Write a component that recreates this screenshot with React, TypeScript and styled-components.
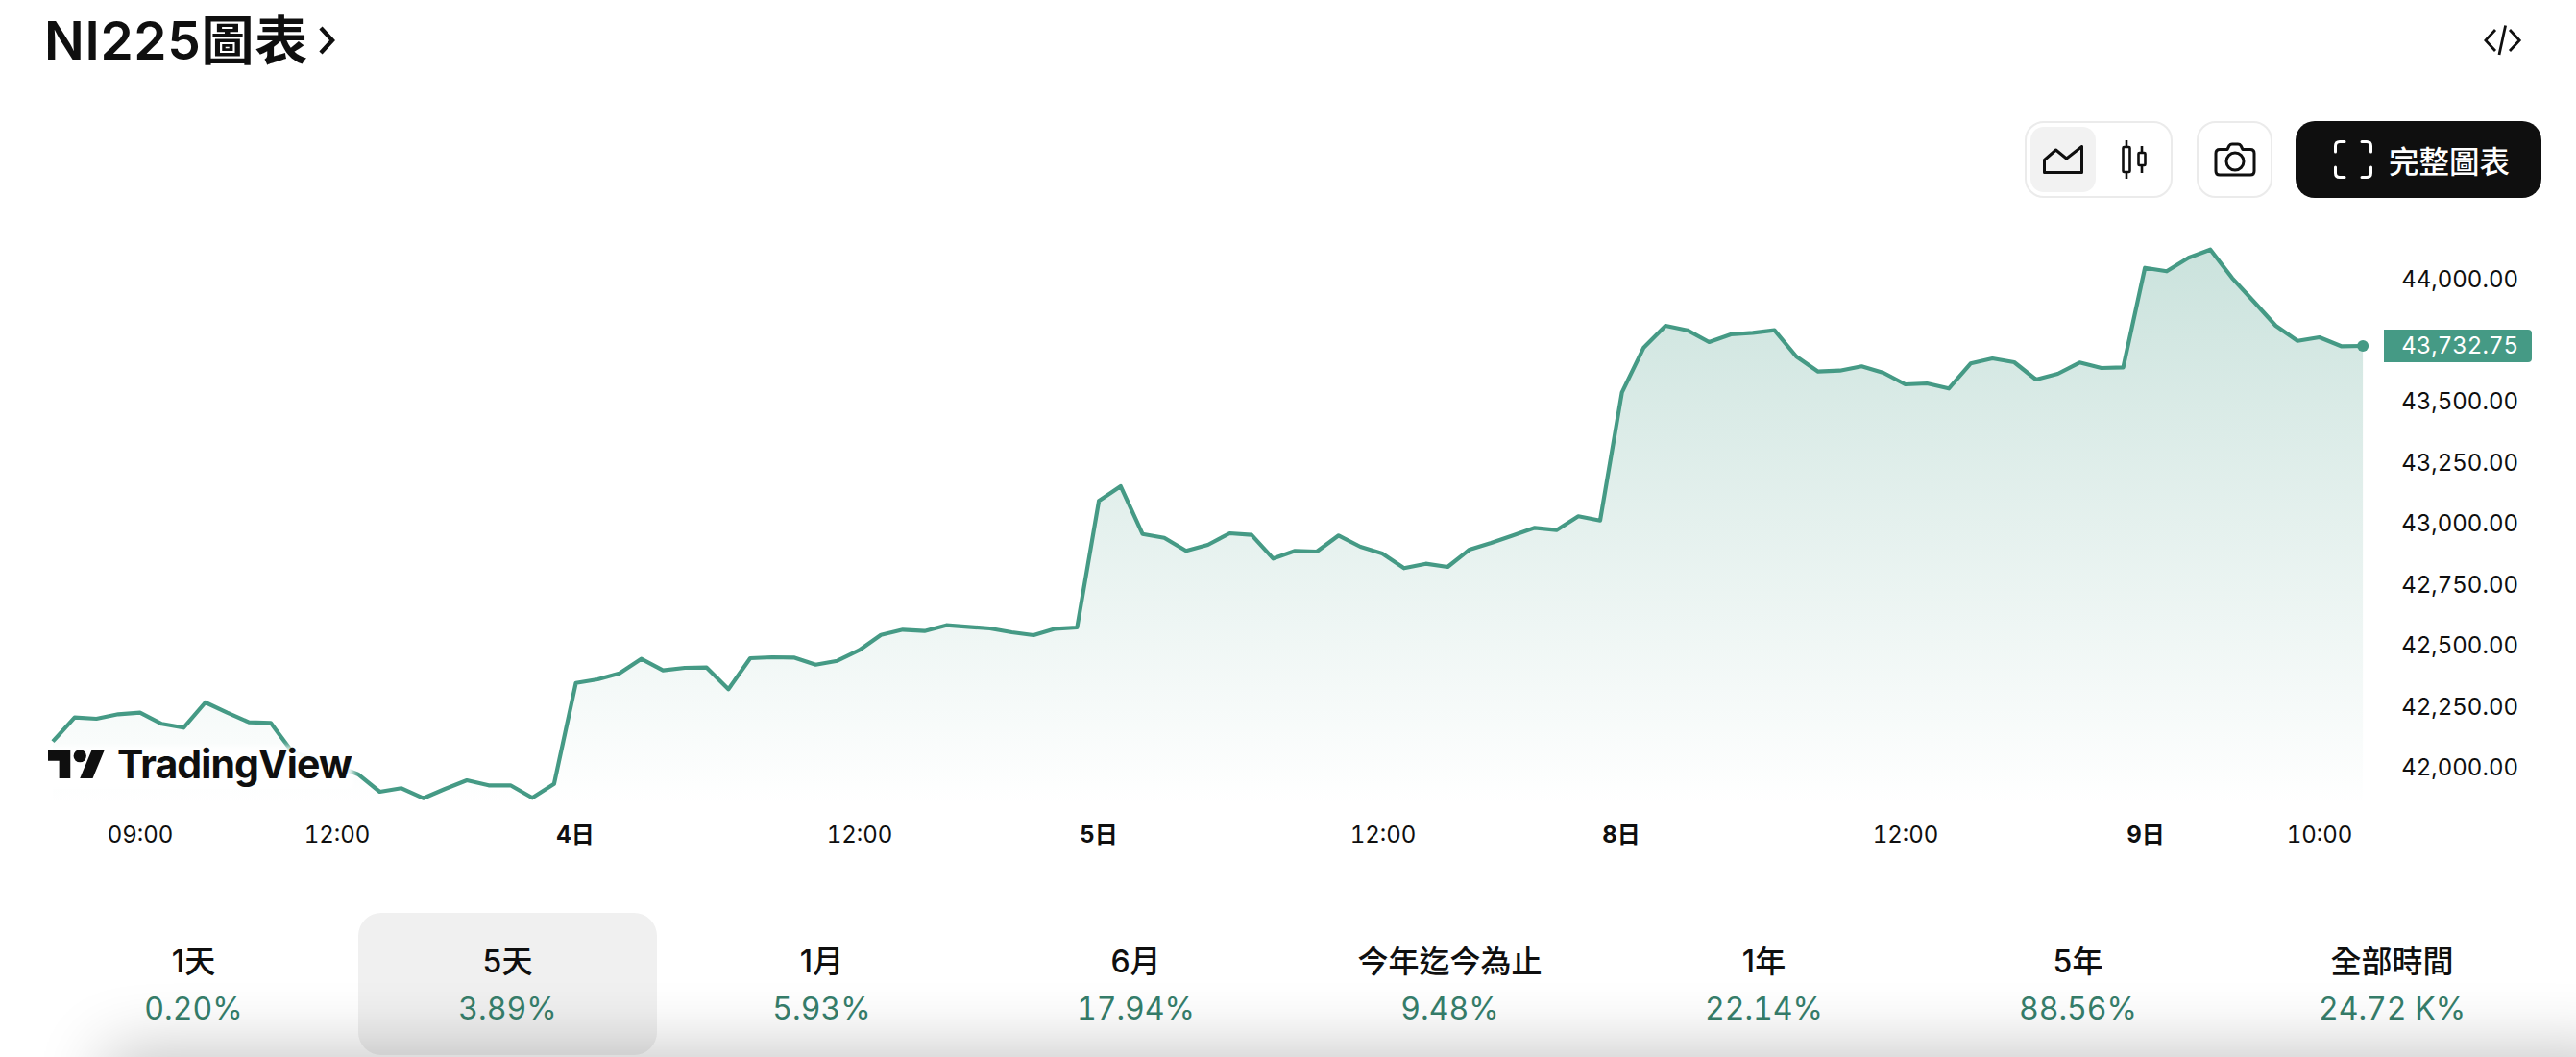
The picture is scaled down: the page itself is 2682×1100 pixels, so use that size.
import React, { FC } from 'react'
import styled, { createGlobalStyle } from 'styled-components'

const FONT = `Inter, 'Noto Sans CJK TC', sans-serif`
const GREEN = '#459a85'

const GlobalStyle = createGlobalStyle`
    html, body {
        margin: 0;
        padding: 0;
        background: #fff;
    }
    body {
        font-family: ${FONT};
        color: #0f0f0f;
    }
`

const Page = styled.div`
    position: relative;
    width: 2682px;
    height: 1100px;
    box-sizing: border-box;
    padding: 0 36px 0 46px;
    overflow: hidden;
    background: #fff;
`

const Header = styled.header`
    height: 84px;
    margin-bottom: 42px;
    display: flex;
    align-items: center;
    justify-content: space-between;
`

const Title = styled.h2`
    margin: 0;
    display: flex;
    align-items: center;
    gap: 11px;
    font-size: 55px;
    line-height: 84px;
    font-weight: 600;
    letter-spacing: 0.7px;
    white-space: nowrap;
`

const EmbedButton = styled.div`
    display: flex;
    margin-right: 20px;
`

const Toolbar = styled.div`
    height: 80px;
    margin-bottom: 24px;
    display: flex;
    justify-content: flex-end;
    gap: 25px;
`

const Segment = styled.div`
    box-sizing: border-box;
    width: 154px;
    height: 80px;
    padding: 4px;
    display: flex;
    gap: 6px;
    border: 2px solid #ebebeb;
    border-radius: 20px;
`

const SegmentItem = styled.div<{ $active?: boolean }>`
    width: 68px;
    height: 68px;
    flex: none;
    display: flex;
    align-items: center;
    justify-content: center;
    border-radius: 14px;
    background: ${props => (props.$active ? '#f2f2f2' : 'transparent')};
`

const IconButton = styled.div`
    box-sizing: border-box;
    width: 79px;
    height: 80px;
    display: flex;
    align-items: center;
    justify-content: center;
    border: 2px solid #ebebeb;
    border-radius: 20px;
`

const FullChartButton = styled.div`
    width: 256px;
    height: 80px;
    margin-left: -1px;
    box-sizing: border-box;
    padding-left: 40px;
    display: flex;
    align-items: center;
    gap: 17px;
    border-radius: 20px;
    background: #0f0f0f;
    color: #fff;
    font-size: 31.5px;
    font-weight: 500;
    white-space: nowrap;
`

const ChartFrame = styled.section`
    height: 670px;
    display: flex;
`

const Plot = styled.div`
    position: relative;
    width: 2436px;
    height: 670px;
    flex: none;

    svg {
        display: block;
    }
`

const AxisLabel = styled.text<{ $bold?: boolean }>`
    font-family: ${FONT};
    font-size: 24px;
    font-weight: ${props => (props.$bold ? 700 : 400)};
    font-variant-numeric: tabular-nums;
    fill: #0f0f0f;
    text-anchor: middle;
`

const Logo = styled.div`
    position: absolute;
    left: 4px;
    top: 545px;
    z-index: 1;
    display: flex;
    align-items: center;
    gap: 13px;
    height: 40px;
    font-size: 41px;
    font-weight: 700;
    letter-spacing: -0.9px;
    color: #0f0f0f;

    &::before {
        content: '';
        position: absolute;
        inset: 2px -2px -6px 0;
        z-index: -1;
        background: rgba(255, 255, 255, 0.96);
        filter: blur(3px);
    }
`

const PriceAxis = styled.div`
    position: relative;
    flex: 1;
    box-sizing: border-box;
    padding: 29px 24px 0 0;
    display: flex;
    flex-direction: column;
    align-items: flex-end;
`

const PriceTick = styled.div`
    height: 63.5px;
    line-height: 63.5px;
    font-size: 24px;
    font-variant-numeric: tabular-nums;
    color: #0f0f0f;
`

const LastPrice = styled.div`
    position: absolute;
    left: 0;
    top: 113px;
    box-sizing: border-box;
    width: 154px;
    height: 34px;
    padding-right: 14px;
    text-align: right;
    line-height: 34px;
    font-size: 24px;
    font-variant-numeric: tabular-nums;
    color: #fff;
    background: ${GREEN};
    border-radius: 0 4px 4px 0;
`

const Tabs = styled.nav`
    margin-top: 50px;
    display: grid;
    grid-template-columns: repeat(8, 311px);
    gap: 16px;
`

const Tab = styled.div<{ $active?: boolean }>`
    height: 148px;
    padding-top: 31px;
    box-sizing: border-box;
    display: flex;
    flex-direction: column;
    align-items: center;
    gap: 9px;
    border-radius: 24px;
    background: ${props => (props.$active ? '#f0f0f0' : 'transparent')};
`

const TabLabel = styled.div`
    font-size: 32px;
    line-height: 40px;
    font-weight: 500;
`

const TabValue = styled.div`
    font-size: 32px;
    line-height: 40px;
    font-variant-numeric: tabular-nums;
    color: #367e6b;
`

// the soft grey edge of whatever sits below this widget
const BottomShade = styled.div`
    position: absolute;
    left: 120px;
    right: -40px;
    top: 1104px;
    height: 60px;
    box-shadow: 0 0 70px 10px rgba(0, 0, 0, 0.24);
    pointer-events: none;
`

const prices = [
    '44,000.00', '', '43,500.00', '43,250.00', '43,000.00',
    '42,750.00', '42,500.00', '42,250.00', '42,000.00',
]

const periods = [
    { label: '1天', value: '0.20%' },
    { label: '5天', value: '3.89%', active: true },
    { label: '1月', value: '5.93%' },
    { label: '6月', value: '17.94%' },
    { label: '今年迄今為止', value: '9.48%' },
    { label: '1年', value: '22.14%' },
    { label: '5年', value: '88.56%' },
    { label: '全部時間', value: '24.72 K%' },
]

const times = [
    { x: 146, text: '09:00' },
    { x: 351, text: '12:00' },
    { x: 599, text: '4日', bold: true },
    { x: 895, text: '12:00' },
    { x: 1144, text: '5日', bold: true },
    { x: 1440, text: '12:00' },
    { x: 1688, text: '8日', bold: true },
    { x: 1984, text: '12:00' },
    { x: 2234, text: '9日', bold: true },
    { x: 2415, text: '10:00' },
]

// y of each sample, in page pixels, read off the reference
const series = [
    771.7, 746.7, 748, 743.3, 741.7, 753.3, 757.3, 731, 741.7, 751.7,
    752.3, 783, 790, 797, 805.7, 824, 820.3, 830.7, 821, 812,
    817.3, 817.3, 830.3, 815.7, 710.7, 707, 700.7, 685.7, 697.7, 695,
    694.7, 717.3, 685, 684, 684.3, 691.7, 687.7, 676.7, 660.7, 655.3,
    656.7, 650.7, 652.3, 654, 658, 661, 654.3, 653, 521.3, 506,
    555.7, 559.7, 573.3, 567, 555, 556.7, 581.3, 573.3, 574, 557.3,
    569, 576, 591.3, 586.7, 590, 572, 565, 557.3, 549.3, 551.7,
    537.3, 541.7, 408.3, 361.7, 339, 343.7, 356, 348, 346.3, 343.7,
    371, 386.7, 385.7, 381.3, 388, 400, 399, 404.3, 378.3, 373,
    377, 395, 389, 377.3, 383, 382.3, 278.7, 282.3, 268.3, 259.7,
    289.3, 314, 339, 354.7, 351, 360.3, 360,
]

const points = series.map((y, i) => `${(55 + i * 22.69).toFixed(1)},${y}`).join(' ')
const lastX = 55 + (series.length - 1) * 22.69

const PriceChart: FC = () => (
    <svg width="2436" height="670" viewBox="46 230 2436 670">
        <defs>
            <linearGradient id="area" gradientUnits="userSpaceOnUse" x1="0" y1="260" x2="0" y2="838">
                <stop offset="0" stopColor={GREEN} stopOpacity="0.28" />
                <stop offset="1" stopColor={GREEN} stopOpacity="0" />
            </linearGradient>
        </defs>
        <polygon points={`55,838 ${points} ${lastX},838`} fill="url(#area)" />
        <polyline points={points} fill="none" stroke={GREEN} strokeWidth="4.2" strokeLinejoin="round" />
        <circle cx={lastX} cy="360" r="6" fill={GREEN} />
        {times.map(t => (
            <AxisLabel key={t.x} x={t.x} y="877" $bold={t.bold}>{t.text}</AxisLabel>
        ))}
    </svg>
)

const App: FC = () => {
    return (
        <Page>
            <GlobalStyle />
            <Header>
                <Title>
                    NI225圖表
                    <svg width="18" height="30" viewBox="0 0 18 30" fill="none" stroke="#0f0f0f" strokeWidth="4.4">
                        <path d="M2 2l12 13L2 28" />
                    </svg>
                </Title>
                <EmbedButton>
                    <svg width="40" height="32" viewBox="0 0 40 32" fill="none" stroke="#0f0f0f" strokeWidth="2.8">
                        <path d="M12 5L1.8 16 12 27" />
                        <path d="M22.6 0.5L16 31" />
                        <path d="M27 5l10.2 11L27 27" />
                    </svg>
                </EmbedButton>
            </Header>

            <Toolbar>
                <Segment>
                    <SegmentItem $active>
                        <svg width="42" height="30" viewBox="0 0 42 30" fill="none" stroke="#0f0f0f" strokeWidth="3" strokeLinejoin="round">
                            <path d="M1.5 15.5L13.5 5l11 9L40.5 1.5v27h-39z" />
                        </svg>
                    </SegmentItem>
                    <SegmentItem>
                        <svg width="26" height="40" viewBox="0 0 26 40" fill="none" stroke="#0f0f0f" strokeWidth="2.6">
                            <path d="M5 0v7M5 33v7M21 6v7M21 26v8" />
                            <rect x="1.5" y="7" width="7" height="26" rx="1" />
                            <rect x="17.5" y="13" width="7" height="13" rx="1" />
                        </svg>
                    </SegmentItem>
                </Segment>
                <IconButton>
                    <svg width="44" height="36" viewBox="0 0 44 36" fill="none" stroke="#0f0f0f" strokeWidth="3" strokeLinejoin="round">
                        <path d="M14 7.500l2-4Q17 2 19 2h6q2 0 3 1.500l2 4h8q4 0 4 4V30q0 4-4 4H6q-4 0-4-4V11.500q0-4 4-4z" />
                        <circle cx="22" cy="20" r="9" />
                    </svg>
                </IconButton>
                <FullChartButton>
                    <svg width="40" height="40" viewBox="0 0 40 40" fill="none" stroke="#fff" strokeWidth="3" strokeLinecap="round">
                        <path d="M1.500 12V6q0-4.500 4.500-4.500h5" />
                        <path d="M29 1.500h5q4.500 0 4.500 4.500v6" />
                        <path d="M38.500 28v6q0 4.500-4.500 4.500h-5" />
                        <path d="M11 38.500H6q-4.500 0-4.500-4.500v-6" />
                    </svg>
                    完整圖表
                </FullChartButton>
            </Toolbar>

            <ChartFrame>
                <Plot>
                    <PriceChart />
                    <Logo>
                        <svg width="59" height="30" viewBox="0 7 35.500 18" fill="#0f0f0f">
                            <path d="M14 25H7V14H0V7h14v18z" />
                            <path d="M28 25h-8l7.500-18h8L28 25z" />
                            <circle cx="20" cy="11" r="4" />
                        </svg>
                        TradingView
                    </Logo>
                </Plot>
                <PriceAxis>
                    {prices.map((price, i) => (
                        <PriceTick key={i}>{price}</PriceTick>
                    ))}
                    <LastPrice>43,732.75</LastPrice>
                </PriceAxis>
            </ChartFrame>

            <Tabs>
                {periods.map(period => (
                    <Tab key={period.label} $active={period.active}>
                        <TabLabel>{period.label}</TabLabel>
                        <TabValue>{period.value}</TabValue>
                    </Tab>
                ))}
            </Tabs>
            <BottomShade />
        </Page>
    )
}

export default App
